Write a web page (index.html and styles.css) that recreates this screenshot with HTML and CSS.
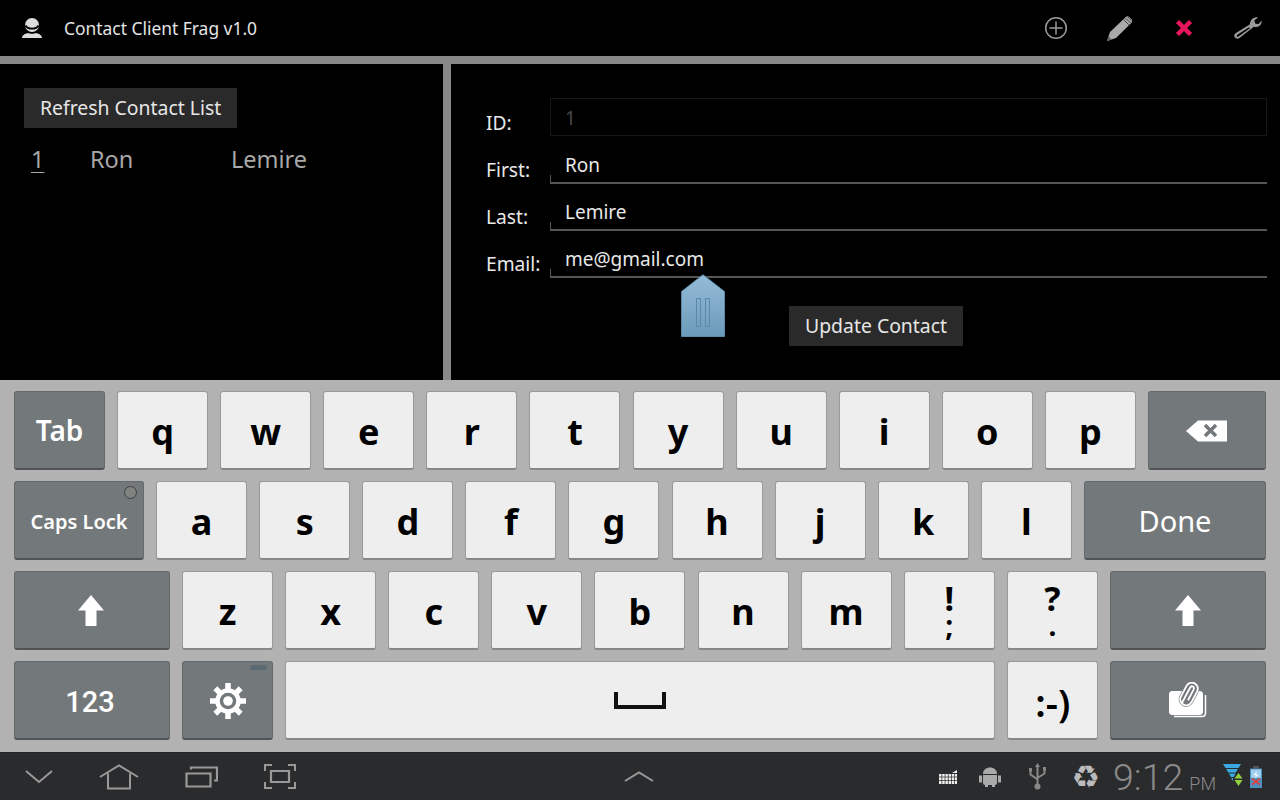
FILE: index.html
```html
<!DOCTYPE html>
<html lang="en">
<head>
    <meta charset="UTF-8">
    <meta name="viewport" content="width=device-width, initial-scale=1.0">
    <title>Contact Client Frag v1.0</title>
    <link rel="stylesheet" href="styles.css">
</head>
<body>
    <header class="action-bar">
        <svg class="app-icon" width="20" height="20" viewBox="0 0 20 20">
            <circle cx="10" cy="7" r="7" fill="#ddd"/>
            <path fill="none" stroke="#000" stroke-width="1.800" d="M3.500 7.500c1 2 3.500 3.200 6.500 3.200s5.500-1.200 6.500-3.200"/>
            <path fill="#ddd" d="M0 20c.3-2.700 2-3.900 6-5 1.300 1 6.700 1 8 0 4 1.100 5.700 2.300 6 5z"/>
        </svg>
        <h1 class="app-title">Contact Client Frag v1.0</h1>
        <div class="actions">
            <div class="action">
                <svg width="24" height="24" viewBox="0 0 24 24" fill="none" stroke="#999" stroke-width="1.500">
                    <circle cx="12" cy="12" r="10.300"/>
                    <path d="M12 5.500v13M5.500 12h13"/>
                </svg>
            </div>
            <div class="action">
                <svg width="26" height="26" viewBox="0 0 26 26">
                    <path fill="#aaa" d="M0 26l3-9L18.500 2.200c1.200-1.100 2.700-1.200 3.700-.2l2.300 2.300c1 1 .9 2.600-.2 3.700L9 23z"/>
                    <path fill="#666" d="M0 26l1.500-4.800 3.300 3.300z"/>
                    <path fill="none" stroke="#444" stroke-width="1" d="M16.500 4.500l5.500 5.500M18.500 3l5 5M20.500 1.700l4 4"/>
                </svg>
            </div>
            <div class="action">
                <svg width="18" height="18" viewBox="0 0 18 18">
                    <path fill="none" stroke="#e8175d" stroke-width="4.500" d="M2.500 2.500l13 13M15.500 2.500l-13 13"/>
                </svg>
            </div>
            <div class="action">
                <svg width="28" height="22" viewBox="0 0 28 22">
                    <path fill="#999" d="M27.500 3.500c.6 3.200-1.600 6.200-5 6.600-1 .1-1.900 0-2.600-.3L5.800 20.800c-1.700 1.300-3.700 1.300-4.900-.2-1.100-1.500-.7-3.400 1-4.500L16 7.200c-.2-3.200 2-6 5.300-6.700.9-.2 1.900-.2 2.700.1l-3.700 3 1.100 3.200 3.300.1z"/>
                    <path fill="#000" d="M3.300 17.800l11.800-7.500.8 1L4.400 19.600c-.6.400-1.200.4-1.500 0-.3-.5-.2-1.300.4-1.800z"/>
                </svg>
            </div>
        </div>
    </header>

    <main class="panes">
        <section class="list-pane">
            <button class="dark-btn">Refresh Contact List</button>
            <div class="contact-row">
                <a class="contact-id">1</a>
                <span>Ron</span>
                <span>Lemire</span>
            </div>
        </section>
        <section class="edit-pane">
            <div class="form-row">
                <label>ID:</label>
                <div class="field field-disabled">1</div>
            </div>
            <div class="form-row">
                <label>First:</label>
                <div class="field">Ron</div>
            </div>
            <div class="form-row">
                <label>Last:</label>
                <div class="field">Lemire</div>
            </div>
            <div class="form-row">
                <label>Email:</label>
                <div class="field">me@gmail.com</div>
            </div>
            <button class="dark-btn update-btn">Update Contact</button>
            <svg class="text-handle" width="44" height="63" viewBox="0 0 44 63">
                <defs>
                    <linearGradient id="handleFill" x1="0" y1="0" x2="0" y2="1">
                        <stop offset="0" stop-color="#95bcd8"/>
                        <stop offset="1" stop-color="#6c9aba"/>
                    </linearGradient>
                </defs>
                <path fill="url(#handleFill)" stroke="#5d89a8" stroke-width="1" d="M22 .7L43.500 17.500V62.500H.5V17.500z"/>
                <path fill="none" stroke="#5d89a8" stroke-width="1" d="M15.500 24.500h4v28h-4zM24.500 24.500h4v28h-4z"/>
            </svg>
        </section>
    </main>

    <section class="keyboard">
        <div class="key-row">
            <div class="key fn label-md">Tab</div>
            <div class="key">q</div>
            <div class="key">w</div>
            <div class="key">e</div>
            <div class="key">r</div>
            <div class="key">t</div>
            <div class="key">y</div>
            <div class="key">u</div>
            <div class="key">i</div>
            <div class="key">o</div>
            <div class="key">p</div>
            <div class="key fn last-key back-key">
                <svg width="42" height="22" viewBox="0 0 42 22">
                    <path fill="#fff" d="M0 11L12 .5H41V21.500H12z"/>
                    <path fill="none" stroke="#73787a" stroke-width="3.500" d="M19 5l11 11M30 5L19 16"/>
                </svg>
            </div>
        </div>
        <div class="key-row">
            <div class="key fn w-caps label-sm">Caps Lock<span class="caps-led"></span></div>
            <div class="key">a</div>
            <div class="key">s</div>
            <div class="key">d</div>
            <div class="key">f</div>
            <div class="key">g</div>
            <div class="key">h</div>
            <div class="key">j</div>
            <div class="key">k</div>
            <div class="key">l</div>
            <div class="key fn last-key label-lg">Done</div>
        </div>
        <div class="key-row">
            <div class="key fn w-wide shift-left">
                <svg width="26" height="31" viewBox="0 0 26 31"><path fill="#fff" d="M13 0l13 15.500h-7.500V31h-11V15.500H0z"/></svg>
            </div>
            <div class="key">z</div>
            <div class="key">x</div>
            <div class="key">c</div>
            <div class="key">v</div>
            <div class="key">b</div>
            <div class="key">n</div>
            <div class="key">m</div>
            <div class="key stacked"><span>!</span><span>;</span></div>
            <div class="key stacked"><span>?</span><span>.</span></div>
            <div class="key fn last-key">
                <svg width="26" height="31" viewBox="0 0 26 31"><path fill="#fff" d="M13 0l13 15.500h-7.500V31h-11V15.500H0z"/></svg>
            </div>
        </div>
        <div class="key-row">
            <div class="key fn w-wide label-num">123</div>
            <div class="key fn settings-key">
                <svg width="36" height="36" viewBox="0 0 36 36">
                    <circle cx="18" cy="18" r="10.500" fill="none" stroke="#fff" stroke-width="4.500"/>
                    <circle cx="18" cy="18" r="4.800" fill="#fff"/>
                    <path fill="none" stroke="#fff" stroke-width="5.500" d="M18 0v7M18 29v7M0 18h7M29 18h7M5.300 5.300l5 5M25.700 25.700l5 5M30.700 5.300l-5 5M10.300 25.700l-5 5"/>
                </svg>
                <span class="settings-dash"></span>
            </div>
            <div class="key w-space">
                <svg width="52" height="17" viewBox="0 0 52 17"><path fill="none" stroke="#111" stroke-width="4" d="M2 0v15h48V0"/></svg>
            </div>
            <div class="key smiley">:-)</div>
            <div class="key fn last-key">
                <svg width="38" height="36" viewBox="0 0 38 36">
                    <path fill="none" stroke="#fff" stroke-width="1.500" d="M5 34.500h28c2 0 3.500-1.500 3.500-3.500V13"/>
                    <path fill="#fff" d="M3 9h28c1.600 0 3 1.400 3 3v18c0 1.600-1.400 3-3 3H3c-1.600 0-3-1.400-3-3V12c0-1.600 1.400-3 3-3z"/>
                    <g transform="translate(20 12) rotate(28)">
                        <rect x="-6" y="-12" width="12" height="24" rx="6" fill="#73787a" stroke="#73787a" stroke-width="3"/>
                        <rect x="-6" y="-12" width="12" height="24" rx="6" fill="none" stroke="#fff" stroke-width="1.800"/>
                        <path fill="none" stroke="#fff" stroke-width="1.800" d="M-2 11V-6c0-1.500 1-2.500 2-2.500s2 1 2 2.500V6"/>
                    </g>
                </svg>
            </div>
        </div>
    </section>

    <footer class="system-bar">
        <div class="nav-left">
            <svg width="28" height="14" viewBox="0 0 28 14"><path fill="none" stroke="#999" stroke-width="2" d="M1 1l13 11L27 1"/></svg>
            <svg width="40" height="26" viewBox="0 0 40 26"><path fill="none" stroke="#999" stroke-width="2" d="M1 13L20 1.500 39 13M9 9.500V24.500H31V9.500"/></svg>
            <svg width="33" height="22" viewBox="0 0 33 22"><path fill="none" stroke="#999" stroke-width="2.200" d="M1.500 7.500h24v13h-24zM6 3.500V1.500h26v13h-3"/></svg>
            <svg width="32" height="25" viewBox="0 0 32 25"><path fill="none" stroke="#999" stroke-width="2" d="M1 7V1h7M24 1h7v6M31 18v6h-7M8 24H1v-6"/><path fill="none" stroke="#999" stroke-width="2.200" d="M7 7h18v11H7z"/></svg>
        </div>
        <div class="nav-center">
            <svg width="30" height="11" viewBox="0 0 30 11"><path fill="none" stroke="#999" stroke-width="2" d="M1 10L15 1.500 29 10"/></svg>
        </div>
        <div class="status">
            <svg class="st-keys" width="18" height="14" viewBox="0 0 18 14">
                <path fill="none" stroke="#eee" stroke-width="10" stroke-dasharray="2.500 .7" d="M0 9h18"/>
                <path fill="none" stroke="#2a2b2d" stroke-width=".7" d="M0 7h18M0 10.500h18"/>
                <path fill="#eee" d="M13 3l5-3v3z"/>
            </svg>
            <svg class="st-android" width="22" height="21" viewBox="0 0 22 21">
                <path fill="#aaa" d="M4 8c0-4 3-6.500 7-6.500S18 4 18 8zM4 9h14v8c0 1-1 2-2 2H6c-1 0-2-1-2-2zM0 9.500h3v7H0zM19 9.500h3v7h-3zM6 19h3v2H6zM13 19h3v2h-3z"/>
            </svg>
            <svg class="st-usb" width="17" height="27" viewBox="0 0 17 27">
                <path fill="none" stroke="#888" stroke-width="2" d="M8.500 3v19M1.500 8v3.500l7 5M15.500 7v3.500l-7 4.500"/>
                <path fill="#888" d="M8.500 0l2.500 4H6zM0 5h3v3.500H0zM14 4h3v3.500h-3z"/>
                <circle cx="8.500" cy="23.500" r="3" fill="#888"/>
            </svg>
            <span class="st-recycle">&#9851;</span>
            <span class="clock">9:12<small>PM</small></span>
            <svg class="st-wifi" width="20" height="25" viewBox="0 0 20 25">
                <path fill="#39a9e0" d="M0 0h18L15.500 4H2.500zM3.200 5h11.600l-1.800 3.500H5.200zM6 9.500h6.500l-1.600 3.500H7.800zM8.300 14h2L9.300 17z"/>
                <path fill="#8fd13f" d="M15.500 9l4 5.500h-8zM11.500 16h8l-4 6z"/>
            </svg>
            <svg class="st-battery" width="12" height="22" viewBox="0 0 12 26" preserveAspectRatio="none">
                <path fill="#555" d="M3 0h6v3H3z"/>
                <path fill="#4f8fc0" d="M0 3h12v23H0z"/>
                <path fill="#9fd0ef" d="M1 4h10v10H1z"/>
                <path fill="#fff" d="M7 6L3.500 11H6l-1 3.500L8.500 10H6z"/>
                <path fill="none" stroke="#d8433a" stroke-width="2" d="M2 15l8 7M10 15l-8 7"/>
            </svg>
        </div>
    </footer>
</body>
</html>
```

FILE: styles.css
```css
* {
    box-sizing: border-box;
}
html, body {
    margin: 0;
    height: 100%;
}
body {
    width: 1280px;
    height: 800px;
    overflow: hidden;
    display: flex;
    flex-direction: column;
    background: #000;
    color: #fff;
    font-family: "Noto Sans", "Open Sans", sans-serif;
}

/* action bar */
.action-bar {
    height: 56px;
    display: flex;
    align-items: center;
    padding-left: 22px;
}
.app-title {
    margin: 0 0 0 22px;
    font-size: 17.4px;
    font-weight: 400;
    color: #e4e4e4;
}
.actions {
    margin-left: auto;
    display: flex;
}
.action {
    width: 64px;
    height: 56px;
    display: flex;
    align-items: center;
    justify-content: center;
}

/* panes */
.panes {
    height: 324px;
    display: flex;
    border-top: 8px solid #888;
}
.list-pane {
    width: 443px;
    padding: 24px 0 0 24px;
}
.dark-btn {
    display: block;
    height: 40px;
    padding: 0 16px 2px;
    background: #2a2a2a;
    border: none;
    color: #e6e6e6;
    font-family: inherit;
    font-size: 19.4px;
}
.contact-row {
    display: grid;
    grid-template-columns: 59px 141px auto;
    margin-top: 15px;
    padding-left: 7px;
    font-size: 23.5px;
    line-height: 32px;
    color: #a8a8a8;
}
.contact-id {
    text-decoration: underline;
    text-underline-offset: 4px;
    text-decoration-thickness: 1px;
}
.edit-pane {
    position: relative;
    flex: 1;
    padding: 34px 13px 0 35px;
    border-left: 8px solid #888;
}
.form-row {
    display: flex;
    align-items: flex-end;
    margin-bottom: 9px;
}
.form-row:first-child {
    margin-bottom: 10px;
}
.form-row label {
    width: 64px;
    font-size: 19.2px;
    line-height: 28px;
    color: #e8e8e8;
}
.form-row:first-child label {
    margin-bottom: -1px;
}
.field {
    flex: 1;
    height: 38px;
    padding-left: 15px;
    font-size: 19px;
    line-height: 38px;
    color: #e8e8e8;
    border-bottom: 2px solid #555;
    background: linear-gradient(#555, #555) left bottom / 1px 7px no-repeat;
}
.field-disabled {
    color: #4a4a4a;
    border: 1px solid #161616;
    background: none;
    padding-left: 14px;
    line-height: 38px;
}
.update-btn {
    margin: 28px 0 0 303px;
}
.text-handle {
    position: absolute;
    left: 230px;
    top: 210px;
}

/* keyboard */
.keyboard {
    height: 372px;
    padding: 11px 14px 0;
    background: #b2b2b2;
    display: flex;
    flex-direction: column;
    gap: 11px;
}
.key-row {
    display: flex;
    gap: 12.1px;
}
.key {
    position: relative;
    width: 91px;
    height: 79px;
    flex: none;
    display: flex;
    align-items: center;
    justify-content: center;
    padding-top: 3px;
    background: #eee;
    border: 1px solid #999;
    border-bottom: 2px solid #888;
    border-radius: 3px;
    color: #000;
    font-size: 36px;
    font-weight: 700;
}
.fn {
    padding-top: 0;
    background: #73787a;
    border-color: #666a6c;
    border-bottom-color: #505456;
    color: #fff;
}
.last-key { flex: 1; }
.back-key { padding-top: 2px; }
.w-caps { width: 130px; }
.w-wide { width: 156px; }
.w-space { width: 710px; padding-top: 0; }
.shift-left { padding-right: 2px; }
.label-md { font-size: 28px; font-weight: 600; }
.label-sm { font-size: 20px; font-weight: 600; padding-top: 2px; }
.label-lg { font-size: 29px; font-weight: 400; }
.label-num {
    padding: 3px 4px 0 0;
    font-family: Roboto, sans-serif;
    font-size: 29px;
    font-weight: 500;
}
.settings-key { padding-top: 2px; }
.caps-led {
    position: absolute;
    top: 4px;
    right: 6px;
    width: 13px;
    height: 13px;
    border-radius: 50%;
    background: #80837f;
    border: 1px solid #3c3f40;
}
.settings-dash {
    position: absolute;
    top: 3px;
    right: 5px;
    width: 17px;
    height: 5px;
    border-radius: 2px;
    background: #5e6a72;
}
.stacked {
    flex-direction: column;
    padding-top: 0;
    font-size: 34px;
    line-height: 30px;
}
.stacked span:last-child {
    font-size: 28px;
    line-height: 24px;
}
.smiley {
    font-size: 38px;
    font-weight: 600;
}

/* system bar */
.system-bar {
    height: 48px;
    display: grid;
    grid-template-columns: 1fr auto 1fr;
    align-items: center;
    background: #2a2b2d;
    border-top: 1px solid #222;
}
.nav-left {
    display: flex;
    align-items: center;
    gap: 46px;
    padding-left: 25px;
}
.nav-center {
    display: flex;
    margin-left: -2px;
}
.status {
    display: flex;
    align-items: center;
    justify-content: flex-end;
    padding-right: 18px;
}
.st-android { margin-left: 22px; }
.st-usb { margin-left: 28px; }
.st-recycle {
    margin-left: 25px;
    font-family: "DejaVu Sans", sans-serif;
    font-size: 32px;
    line-height: 1;
    color: #bbb;
}
.clock {
    margin-left: 13px;
    font-family: Roboto, sans-serif;
    font-size: 37.5px;
    font-weight: 300;
    color: #8a8a8a;
}
.clock small {
    margin-left: 6px;
    font-size: 18px;
    font-weight: 300;
}
.st-wifi { margin-left: 7px; }
.st-battery { margin-left: 7px; }
```
